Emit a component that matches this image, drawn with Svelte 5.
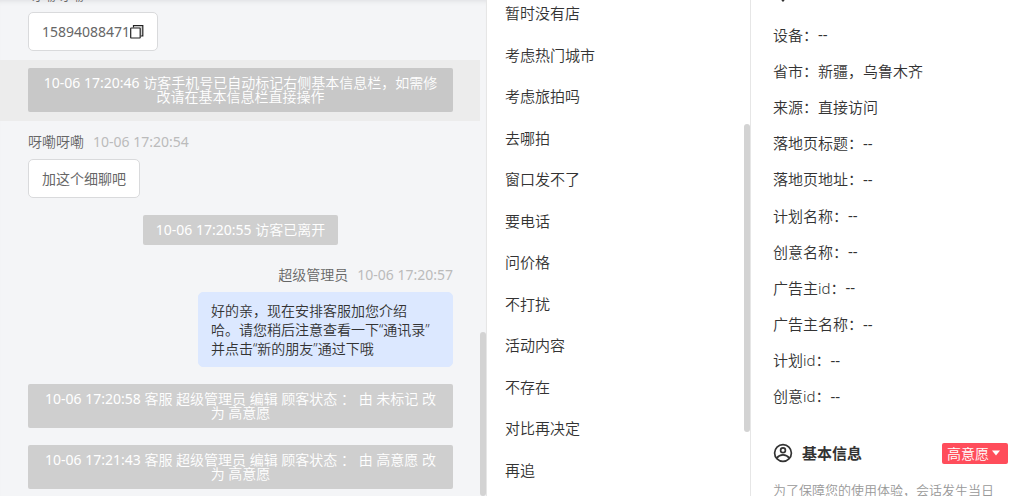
<script lang="ts">
    type Entry =
        | { kind: "message"; name: string; time: string; text: string; mine?: boolean; copy?: boolean }
        | { kind: "notice"; time: string; text: string; active?: boolean };

    const entries: Entry[] = [
        { kind: "message", name: "呀嘞呀嘞", time: "10-06 17:20:45", text: "15894088471", copy: true },
        { kind: "notice", time: "10-06 17:20:46", text: "访客手机号已自动标记右侧基本信息栏，如需修改请在基本信息栏直接操作", active: true },
        { kind: "message", name: "呀嘞呀嘞", time: "10-06 17:20:54", text: "加这个细聊吧" },
        { kind: "notice", time: "10-06 17:20:55", text: "访客已离开" },
        {
            kind: "message",
            name: "超级管理员",
            time: "10-06 17:20:57",
            text: "好的亲，现在安排客服加您介绍\n哈。请您稍后注意查看一下“通讯录”\n并点击“新的朋友”通过下哦",
            mine: true
        },
        { kind: "notice", time: "10-06 17:20:58", text: "客服 超级管理员 编辑 顾客状态 ： 由 未标记 改为 高意愿" },
        { kind: "notice", time: "10-06 17:21:43", text: "客服 超级管理员 编辑 顾客状态 ： 由 高意愿 改为 高意愿" }
    ];

    const replies = [
        "暂时没有店",
        "考虑热门城市",
        "考虑旅拍吗",
        "去哪拍",
        "窗口发不了",
        "要电话",
        "问价格",
        "不打扰",
        "活动内容",
        "不存在",
        "对比再决定",
        "再追"
    ];

    const details = [
        { label: "设备", value: "--" },
        { label: "省市", value: "新疆，乌鲁木齐" },
        { label: "来源", value: "直接访问" },
        { label: "落地页标题", value: "--" },
        { label: "落地页地址", value: "--" },
        { label: "计划名称", value: "--" },
        { label: "创意名称", value: "--" },
        { label: "广告主id", value: "--" },
        { label: "广告主名称", value: "--" },
        { label: "计划id", value: "--" },
        { label: "创意id", value: "--" }
    ];

    let status = $state("高意愿");

    function copyText(text: string) {
        navigator.clipboard?.writeText(text);
    }
</script>

<main class="workspace">
    <section class="chat">
        <div class="log">
            {#each entries as entry}
                {#if entry.kind === "message"}
                    <article class="message" class:mine={entry.mine}>
                        <div class="meta">
                            <span class="name">{entry.name}</span>
                            <time>{entry.time}</time>
                        </div>
                        <div class="bubble">
                            <span>{entry.text}</span>
                            {#if entry.copy}
                                <button class="copy" aria-label="复制" onclick={() => copyText(entry.text)}>
                                    <svg width="14" height="16" viewBox="0 0 14 16" fill="none">
                                        <path d="M3.500 3.500V1.700h9.300v10.200h-2" stroke="#222" stroke-width="1.200" />
                                        <path d="M4 2.900h7.300v8.500" stroke="#ccc" stroke-width="1" />
                                        <rect x="0.700" y="4" width="9.500" height="10" rx="0.500" fill="#fff" stroke="#222" stroke-width="1.200" />
                                    </svg>
                                </button>
                            {/if}
                        </div>
                    </article>
                {:else}
                    <div class="event" class:active={entry.active}>
                        <p class="notice"><time>{entry.time}</time> {entry.text}</p>
                    </div>
                {/if}
            {/each}
        </div>
        <div class="thumb chat-thumb"></div>
    </section>

    <section class="replies">
        <ul>
            {#each replies as reply}
                <li><button>{reply}</button></li>
            {/each}
        </ul>
        <div class="thumb reply-thumb"></div>
    </section>

    <aside class="visitor">
        <div class="visit-head">
            <svg width="20" height="20" viewBox="0 0 20 20" fill="none" stroke="#333" stroke-width="2">
                <path d="M10 18.500C6 14 3.500 11 3.500 8a6.500 6.500 0 0 1 13 0c0 3-2.500 6-6.500 10.500z" />
                <circle cx="10" cy="8" r="2.500" />
            </svg>
        </div>
        <dl>
            {#each details as item}
                <div class="row">
                    <dt>{item.label}：</dt>
                    <dd class:empty={item.value === "--"}>{item.value}</dd>
                </div>
            {/each}
        </dl>
        <div class="basic">
            <header>
                <svg width="20" height="20" viewBox="0 0 20 20" fill="none" stroke="#333" stroke-width="1.700">
                    <circle cx="10" cy="10" r="8.400" />
                    <circle cx="10" cy="7.300" r="2.400" />
                    <path d="M3.600 15.200c1.700-2.300 3.800-3.400 6.400-3.400s4.700 1.100 6.400 3.400" />
                </svg>
                <h2>基本信息</h2>
                <div class="status">
                    <select aria-label="顾客状态" bind:value={status}>
                        <option>高意愿</option>
                        <option>未标记</option>
                    </select>
                    <svg width="8" height="6" viewBox="0 0 8 6"><path d="M0 0.500h8L4 5.500z" fill="#fff" /></svg>
                </div>
            </header>
            <p class="tip">为了保障您的使用体验，会话发生当日</p>
        </div>
    </aside>
</main>

<style>
    :global(body) {
        margin: 0;
        background: #fff;
    }

    .workspace {
        display: grid;
        grid-template-columns: minmax(0, 1fr) 264px 265px;
        height: 100vh;
        overflow: hidden;
        font-family: "Noto Sans", "Noto Sans CJK SC", sans-serif;
        font-size: 15px;
        font-weight: 350;
        color: #333;
    }

    button,
    select {
        border: none;
        background: none;
        padding: 0;
        font: inherit;
        color: inherit;
        cursor: pointer;
    }

    svg {
        display: block;
        flex: none;
    }

    .chat,
    .replies {
        position: relative;
        overflow: hidden;
    }

    .chat {
        background: #f4f5f7;
        border-right: 1px solid #e6e6e6;
        box-shadow: inset 0 5px 5px -4px #dcdde0;
        font-size: 14px;
    }

    /* scrolled: the first message head is partly out of view */
    .log {
        margin: -26px 6px 0 0;
    }

    time,
    .empty {
        font-weight: 400;
    }

    .message {
        display: flex;
        flex-direction: column;
        align-items: flex-start;
        padding: 11px 27px 9px 28px;
    }

    .mine {
        align-items: flex-end;
    }

    .meta {
        display: flex;
        gap: 9px;
        margin-bottom: 7px;
        line-height: 20px;
        color: #666;
    }

    .meta time {
        color: #bbb;
    }

    .bubble {
        display: flex;
        align-items: center;
        box-sizing: border-box;
        padding: 9px 13px;
        border: 1px solid #d9dadc;
        border-radius: 5px;
        background: #fff;
        line-height: 19px;
        font-weight: 400;
        color: #666;
    }

    .mine .bubble {
        width: 60%;
        padding: 8px 12px;
        border-color: #dce8ff;
        background: #dce8ff;
        font-weight: 350;
        color: #333;
        white-space: pre-line;
    }

    .event {
        display: flex;
        justify-content: center;
        padding: 8px 27px 9px 28px;
    }

    .active {
        background: #ececec;
    }

    .notice {
        margin: 0;
        padding: 8px 13px;
        border-radius: 2px;
        background: #cfcfcf;
        line-height: 14px;
        text-align: center;
        color: #fff;
    }

    .active .notice {
        background: #c8c8c8;
    }

    .thumb {
        position: absolute;
        right: 0;
        width: 6px;
        border-radius: 3px;
        background: #d3d3d3;
    }

    .chat-thumb {
        top: 67%;
        bottom: 0;
    }

    .reply-thumb {
        top: 25%;
        height: 62%;
    }

    .replies {
        display: flex;
        border-right: 1px solid #e6e6e6;
    }

    .replies ul {
        display: flex;
        flex: 1;
        flex-direction: column;
        margin: -8px 0 6px;
        padding: 0 18px;
        list-style: none;
    }

    .replies li {
        display: flex;
        flex: 1;
        align-items: center;
    }

    .visitor {
        display: flex;
        flex-direction: column;
        padding: 0 8px 0 22px;
        overflow: hidden;
    }

    .visit-head {
        margin-top: -18px;
    }

    dl {
        display: flex;
        flex: 1;
        flex-direction: column;
        margin: 14px 0 0;
    }

    .row {
        display: flex;
        flex: 1;
        align-items: center;
    }

    dd {
        margin: 0;
    }

    .basic {
        height: 82px;
    }

    header {
        display: flex;
        align-items: center;
        margin-top: 28px;
    }

    h2 {
        flex: 1;
        margin: 0 0 0 9px;
        font-size: 15px;
        line-height: 22px;
    }

    .status {
        display: flex;
        align-items: center;
        box-sizing: border-box;
        width: 66px;
        height: 21px;
        padding: 0 8px 0 5px;
        border-radius: 2px;
        background: #ff4d5b;
        color: #fff;
        font-size: 14px;
    }

    .status select {
        flex: 1;
        appearance: none;
        line-height: 21px;
    }

    .status option {
        color: #333;
    }

    .tip {
        margin: 16px 0 0;
        font-size: 13px;
        line-height: 20px;
        color: #999;
        white-space: nowrap;
    }
</style>
